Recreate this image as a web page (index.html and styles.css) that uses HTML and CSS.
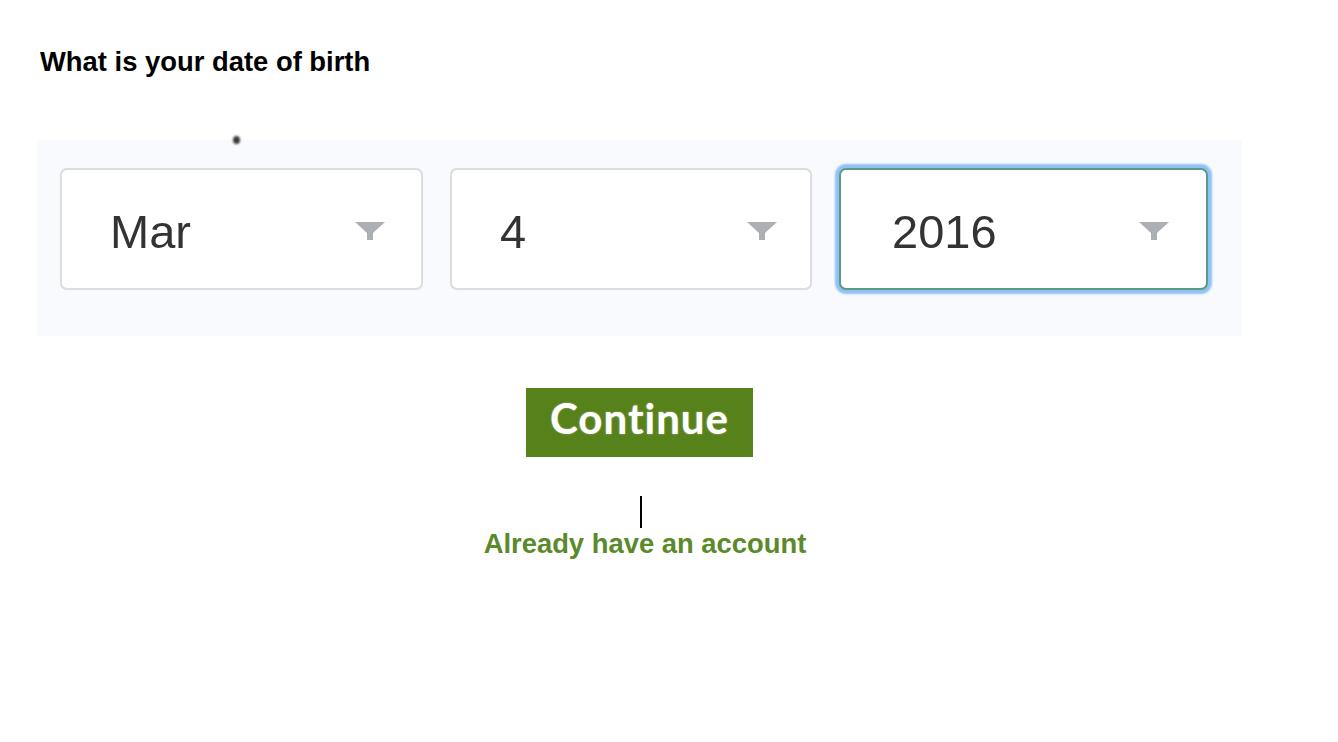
FILE: index.html
```html
<!DOCTYPE html>
<html lang="en">
<head>
<meta charset="utf-8">
<title>Date of birth</title>
<link rel="stylesheet" href="styles.css">
</head>
<body>
<main class="page">
  <h1 class="title">What is your date of birth</h1>
  <section class="panel">
    <span class="crop-mark"></span>
    <div class="select select-month">
      <span class="value">Mar</span>
      <svg class="caret" width="32" height="20" viewBox="0 0 32 20"><path d="M1 1 H31 L19 12 V19 H13 V12 Z" /></svg>
    </div>
    <div class="select select-day">
      <span class="value">4</span>
      <svg class="caret" width="32" height="20" viewBox="0 0 32 20"><path d="M1 1 H31 L19 12 V19 H13 V12 Z" /></svg>
    </div>
    <div class="select select-year is-focused">
      <span class="value">2016</span>
      <svg class="caret" width="32" height="20" viewBox="0 0 32 20"><path d="M1 1 H31 L19 12 V19 H13 V12 Z" /></svg>
    </div>
  </section>
  <div class="actions">
    <button class="btn-continue" type="button">Continue</button>
    <span class="cursor"></span>
    <a class="login-link" href="#">Already have an account</a>
  </div>
</main>
</body>
</html>
```
FILE: styles.css
```css
html, body {
  margin: 0;
  padding: 0;
  background: #ffffff;
}

body {
  font-family: "Liberation Sans", Arial, sans-serif;
  color: #000;
}

.page {
  width: 1205px;
  margin-left: 37px;
  padding-top: 46px;
}

.title {
  margin: 0 0 62px 3px;
  font-size: 27.4px;
  line-height: 32px;
  font-weight: 700;
  color: #000;
}

.panel {
  position: relative;
  display: flex;
  align-items: flex-start;
  height: 196px;
  box-sizing: border-box;
  padding: 28px 0 0 23px;
  background: #f9fafd;
}

.crop-mark {
  position: absolute;
  left: 196px;
  top: -4px;
  width: 7px;
  height: 8px;
  border-radius: 50%;
  background: #3a3a3a;
  filter: blur(0.9px);
}

.select {
  display: flex;
  align-items: center;
  justify-content: space-between;
  box-sizing: border-box;
  height: 122px;
  background: #fff;
  border: 2px solid #dcdddf;
  border-radius: 7px;
  box-shadow: 0 0 1px rgba(0, 0, 0, 0.08);
}

.select-month {
  width: 363px;
  padding: 0 35px 0 48px;
}

.select-day {
  width: 362px;
  margin-left: 27px;
  padding: 0 32px 0 48px;
}

.select-year {
  width: 369px;
  margin-left: 27px;
  padding: 0 36px 0 51px;
}

.select.is-focused {
  border: 2px solid #5d9a82;
  box-shadow: 0 0 2px 4px #8fc2f6;
}

.value {
  font-family: "Liberation Sans", Arial, sans-serif;
  font-size: 47px;
  line-height: 1;
  color: #333;
  filter: blur(0.5px);
  margin-top: 4px;
}

.caret {
  display: block;
  fill: #acafb4;
  filter: blur(0.7px);
  margin-top: 4px;
}

.actions {
  display: flex;
  flex-direction: column;
  align-items: center;
  padding-top: 52px;
}

.btn-continue {
  width: 227px;
  height: 69px;
  border: 0;
  margin: 0;
  padding: 0 0 10px 0;
  background: #57811a;
  color: #fff;
  font-family: Lato, "Open Sans", sans-serif;
  font-weight: 700;
  font-size: 42px;
  letter-spacing: 1px;
  line-height: 1;
  text-shadow: 0 0 2px rgba(255, 255, 255, 0.5);
}

.cursor {
  display: block;
  width: 2px;
  height: 32px;
  margin-top: 39px;
  margin-left: 3px;
  background: #000;
}

.login-link {
  display: block;
  padding-left: 11px;
  font-size: 27.4px;
  line-height: 32px;
  font-weight: 700;
  color: #5a8a2a;
  text-decoration: none;
}
```
